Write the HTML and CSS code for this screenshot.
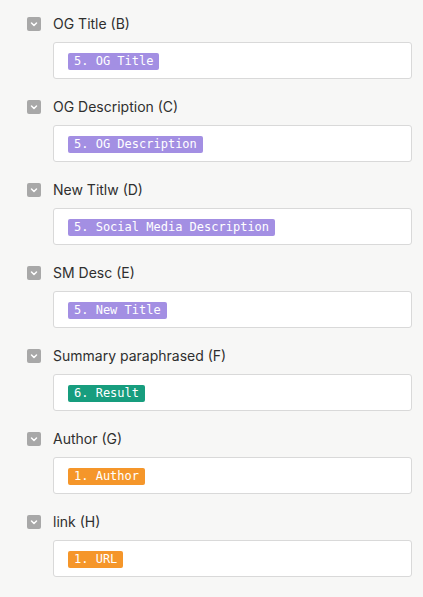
FILE: index.html
```html
<!DOCTYPE html>
<html lang="en">
<head>
  <meta charset="UTF-8" />
  <title>Field mapping</title>
  <link rel="stylesheet" href="styles.css">
</head>
<body>

  <div class="fields">
    <div class="field">
      <div class="field-head">
        <span class="toggle"><svg viewBox="0 0 14 14" width="14" height="14"><path d="M4.5 6 L7 8.5 L9.5 6" fill="none" stroke="#fff" stroke-width="1.5" stroke-linecap="round" stroke-linejoin="round"/></svg></span>
        <span class="field-name">OG Title (B)</span>
      </div>
      <div class="field-box"><span class="pill purple">5. OG Title</span></div>
    </div>

    <div class="field">
      <div class="field-head">
        <span class="toggle"><svg viewBox="0 0 14 14" width="14" height="14"><path d="M4.5 6 L7 8.5 L9.5 6" fill="none" stroke="#fff" stroke-width="1.5" stroke-linecap="round" stroke-linejoin="round"/></svg></span>
        <span class="field-name">OG Description (C)</span>
      </div>
      <div class="field-box"><span class="pill purple">5. OG Description</span></div>
    </div>

    <div class="field">
      <div class="field-head">
        <span class="toggle"><svg viewBox="0 0 14 14" width="14" height="14"><path d="M4.5 6 L7 8.5 L9.5 6" fill="none" stroke="#fff" stroke-width="1.5" stroke-linecap="round" stroke-linejoin="round"/></svg></span>
        <span class="field-name">New Titlw (D)</span>
      </div>
      <div class="field-box"><span class="pill purple">5. Social Media Description</span></div>
    </div>

    <div class="field">
      <div class="field-head">
        <span class="toggle"><svg viewBox="0 0 14 14" width="14" height="14"><path d="M4.5 6 L7 8.5 L9.5 6" fill="none" stroke="#fff" stroke-width="1.5" stroke-linecap="round" stroke-linejoin="round"/></svg></span>
        <span class="field-name">SM Desc (E)</span>
      </div>
      <div class="field-box"><span class="pill purple">5. New Title</span></div>
    </div>

    <div class="field">
      <div class="field-head">
        <span class="toggle"><svg viewBox="0 0 14 14" width="14" height="14"><path d="M4.5 6 L7 8.5 L9.5 6" fill="none" stroke="#fff" stroke-width="1.5" stroke-linecap="round" stroke-linejoin="round"/></svg></span>
        <span class="field-name">Summary paraphrased (F)</span>
      </div>
      <div class="field-box"><span class="pill green">6. Result</span></div>
    </div>

    <div class="field">
      <div class="field-head">
        <span class="toggle"><svg viewBox="0 0 14 14" width="14" height="14"><path d="M4.5 6 L7 8.5 L9.5 6" fill="none" stroke="#fff" stroke-width="1.5" stroke-linecap="round" stroke-linejoin="round"/></svg></span>
        <span class="field-name">Author (G)</span>
      </div>
      <div class="field-box"><span class="pill orange">1. Author</span></div>
    </div>

    <div class="field">
      <div class="field-head">
        <span class="toggle"><svg viewBox="0 0 14 14" width="14" height="14"><path d="M4.5 6 L7 8.5 L9.5 6" fill="none" stroke="#fff" stroke-width="1.5" stroke-linecap="round" stroke-linejoin="round"/></svg></span>
        <span class="field-name">link (H)</span>
      </div>
      <div class="field-box"><span class="pill orange">1. URL</span></div>
    </div>
  </div>

</body>
</html>
```

FILE: styles.css
```css
body {
  margin: 0;
  font-family: Inter, 'Noto Sans', sans-serif;
  background-color: #f7f7f6;
  color: #333;
}

.fields {
  padding: 13px 11px 0 27px;
  display: flex;
  flex-direction: column;
  gap: 17px;
}

.field-head {
  display: flex;
  align-items: center;
  height: 20px;
  gap: 12px;
}

.toggle {
  width: 14px;
  height: 14px;
  border-radius: 2px;
  background-color: #a8a8a8;
  display: flex;
  margin-top: 2px;
}

.field-name {
  font-size: 14px;
  color: #2f2f2f;
}

.field-box {
  margin: 9px 0 0 26px;
  height: 37px;
  box-sizing: border-box;
  background: #fff;
  border: 1px solid #d9d9d9;
  border-radius: 3px;
  display: flex;
  align-items: center;
  padding: 0 14px;
}

.pill {
  font-family: 'DejaVu Sans Mono', monospace;
  font-size: 12px;
  line-height: 17px;
  padding: 0 6px;
  border-radius: 2px;
  color: #fff;
  margin-top: 2px;
}

.purple {
  background-color: #a38fe3;
}

.green {
  background-color: #179d7e;
}

.orange {
  background-color: #f5962a;
}
```
